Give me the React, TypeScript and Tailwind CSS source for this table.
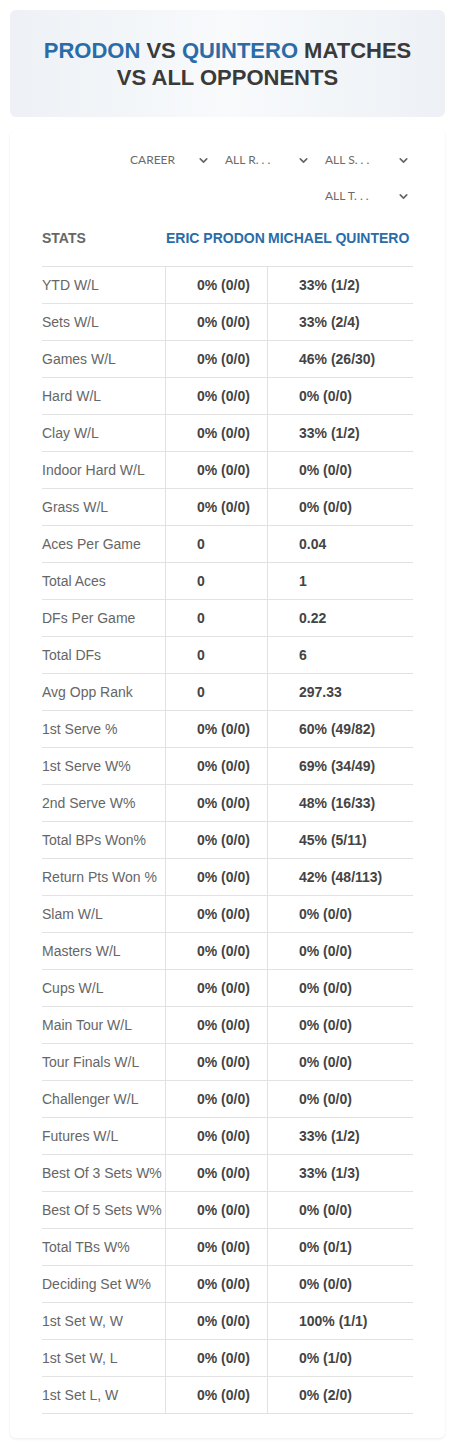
import { ChevronDown } from "lucide-react";

const rows: [string, string, string][] = [
  ["YTD W/L", "0% (0/0)", "33% (1/2)"],
  ["Sets W/L", "0% (0/0)", "33% (2/4)"],
  ["Games W/L", "0% (0/0)", "46% (26/30)"],
  ["Hard W/L", "0% (0/0)", "0% (0/0)"],
  ["Clay W/L", "0% (0/0)", "33% (1/2)"],
  ["Indoor Hard W/L", "0% (0/0)", "0% (0/0)"],
  ["Grass W/L", "0% (0/0)", "0% (0/0)"],
  ["Aces Per Game", "0", "0.04"],
  ["Total Aces", "0", "1"],
  ["DFs Per Game", "0", "0.22"],
  ["Total DFs", "0", "6"],
  ["Avg Opp Rank", "0", "297.33"],
  ["1st Serve %", "0% (0/0)", "60% (49/82)"],
  ["1st Serve W%", "0% (0/0)", "69% (34/49)"],
  ["2nd Serve W%", "0% (0/0)", "48% (16/33)"],
  ["Total BPs Won%", "0% (0/0)", "45% (5/11)"],
  ["Return Pts Won %", "0% (0/0)", "42% (48/113)"],
  ["Slam W/L", "0% (0/0)", "0% (0/0)"],
  ["Masters W/L", "0% (0/0)", "0% (0/0)"],
  ["Cups W/L", "0% (0/0)", "0% (0/0)"],
  ["Main Tour W/L", "0% (0/0)", "0% (0/0)"],
  ["Tour Finals W/L", "0% (0/0)", "0% (0/0)"],
  ["Challenger W/L", "0% (0/0)", "0% (0/0)"],
  ["Futures W/L", "0% (0/0)", "33% (1/2)"],
  ["Best Of 3 Sets W%", "0% (0/0)", "33% (1/3)"],
  ["Best Of 5 Sets W%", "0% (0/0)", "0% (0/0)"],
  ["Total TBs W%", "0% (0/0)", "0% (0/1)"],
  ["Deciding Set W%", "0% (0/0)", "0% (0/0)"],
  ["1st Set W, W", "0% (0/0)", "100% (1/1)"],
  ["1st Set W, L", "0% (0/0)", "0% (1/0)"],
  ["1st Set L, W", "0% (0/0)", "0% (2/0)"],
];

function Select({ label, w }: { label: string; w: string }) {
  return (
    <div className={`flex items-center justify-between ${w} text-[12px] text-[#6b6b6b] [font-family:Lato,sans-serif]`}>
      <span>{label}</span>
      <ChevronDown size={13} strokeWidth={3} className="text-[#666] mr-[3px]" />
    </div>
  );
}

export default function App() {
  return (
    <div className="bg-white min-h-[1448px] [font-family:'Liberation_Sans',Arial,sans-serif] pt-[10px]">
      <div className="mx-[10px] rounded-[6px] bg-gradient-to-r from-[#edf1f5] via-[#f8fafc] to-[#edf1f5] h-[107px] flex items-center justify-center">
        <h1 className="text-center font-bold text-[22px] leading-[27px] text-[#3a3a3a] uppercase">
          <span className="text-[#2a6ca8]">Prodon</span> vs{" "}
          <span className="text-[#2a6ca8]">Quintero</span> Matches
          <br />
          vs all opponents
        </h1>
      </div>

      <div className="mx-[10px] mt-[13px] rounded-[6px] shadow-[0_1px_3px_rgba(0,0,0,0.08)] px-[32px] pt-[12px] pb-[24px]">
        <div className="flex flex-col items-end">
          <div className="flex h-[36px] items-center gap-[12px]">
            <Select label="CAREER" w="w-[83px]" />
            <Select label="ALL R. . ." w="w-[88px]" />
            <Select label="ALL S. . ." w="w-[88px]" />
          </div>
          <div className="flex h-[36px] items-center">
            <Select label="ALL T. . ." w="w-[88px]" />
          </div>
        </div>

        <div className="flex h-[52px] pb-[4px] items-center text-[14px] font-bold">
          <div className="w-[124px] text-[#666]">STATS</div>
          <div className="w-[102px] text-[#2a6ca8] whitespace-nowrap">ERIC PRODON</div>
          <div className="flex-1 text-[#2a6ca8] whitespace-nowrap">MICHAEL QUINTERO</div>
        </div>

        <div className="border-t border-[#e2e2e2]">
          {rows.map(([label, a, b]) => (
            <div key={label} className="flex h-[37px] border-b border-[#e2e2e2] text-[14px]">
              <div className="w-[124px] flex items-center text-[#666] border-r border-[#e2e2e2] whitespace-nowrap">
                {label}
              </div>
              <div className="w-[102px] flex items-center pl-[31px] font-bold text-[#444] border-r border-[#e2e2e2]">
                {a}
              </div>
              <div className="flex-1 flex items-center pl-[31px] font-bold text-[#444]">{b}</div>
            </div>
          ))}
        </div>
      </div>
    </div>
  );
}
